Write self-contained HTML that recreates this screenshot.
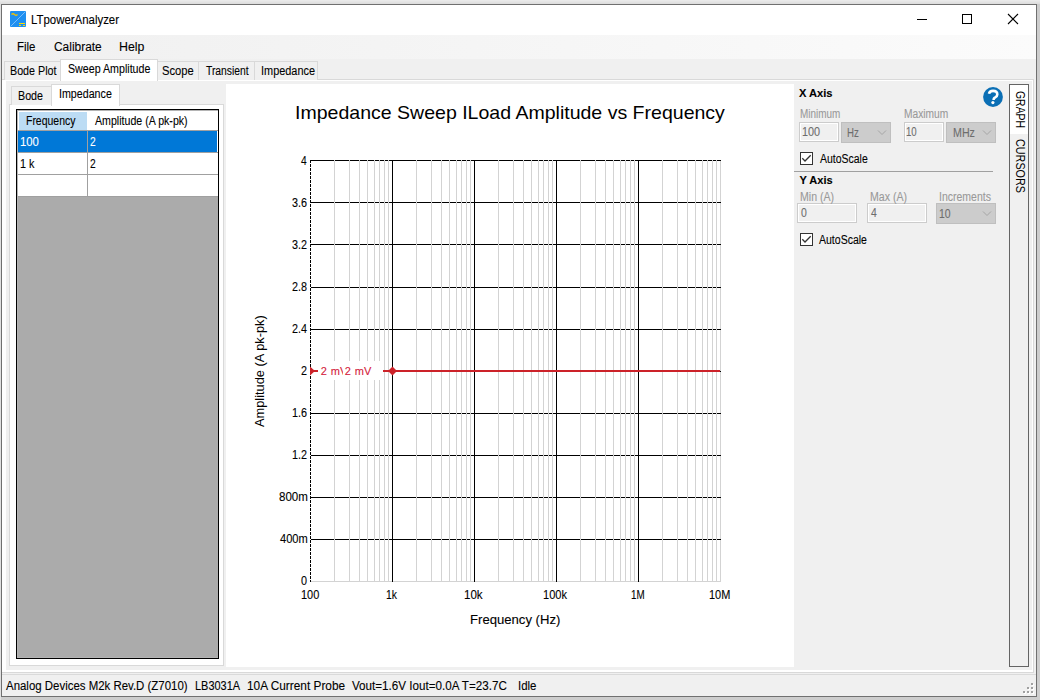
<!DOCTYPE html>
<html><head><meta charset="utf-8">
<style>
html,body{margin:0;padding:0;width:1040px;height:700px;overflow:hidden;background:#cdcdcd;font-family:"Liberation Sans",sans-serif;}
.a{position:absolute;box-sizing:border-box;}
.t{position:absolute;white-space:nowrap;transform-origin:0 0;font-family:"Liberation Sans",sans-serif;-webkit-text-stroke:0.1px currentColor;}
</style></head><body>
<div class="a" style="left:0;top:0;width:1040px;height:4px;background:linear-gradient(#ececec,#dcdcdc)"></div>
<div class="a" style="left:0;top:4px;width:1px;height:696px;background:#e0e0e0"></div>
<!-- window -->
<div class="a" style="left:1px;top:4px;width:1036px;height:693px;border:1px solid #707070;background:#f0f0f0"></div>
<!-- title bar -->
<div class="a" style="left:2px;top:5px;width:1034px;height:30px;background:#fff"></div>
<!-- menu bar -->
<div class="a" style="left:2px;top:35px;width:1034px;height:24px;background:linear-gradient(to right,#f0f0f0,#fbfbfb)"></div>
<!-- tab strip -->
<div class="a" style="left:2px;top:59px;width:1034px;height:20px;background:#f0f0f0"></div>
<!-- outer tab pane -->
<div class="a" style="left:2px;top:79px;width:1032px;height:594px;border:1px solid #d9d9d9;border-left:none;background:#fff"></div>
<div class="a" style="left:6px;top:81px;width:1026px;height:589px;background:#f0f0f0"></div>
<!-- outer tabs -->
<div class="a" style="left:4px;top:61px;width:57px;height:19px;border:1px solid #d9d9d9;border-bottom:none;background:#f0f0f0"></div>
<div class="a" style="left:157px;top:61px;width:42px;height:19px;border:1px solid #d9d9d9;border-bottom:none;background:#f0f0f0"></div>
<div class="a" style="left:198px;top:61px;width:57px;height:19px;border:1px solid #d9d9d9;border-bottom:none;background:#f0f0f0"></div>
<div class="a" style="left:254px;top:61px;width:64px;height:19px;border:1px solid #d9d9d9;border-bottom:none;background:#f0f0f0"></div>
<div class="a" style="left:60px;top:59px;width:98px;height:22px;border:1px solid #d9d9d9;border-bottom:none;background:#fff"></div>
<!-- inner tab pane -->
<div class="a" style="left:9px;top:104px;width:215px;height:562px;border:1px solid #d9d9d9;background:#fff"></div>
<div class="a" style="left:11px;top:86px;width:41px;height:19px;border:1px solid #d9d9d9;border-bottom:none;background:#f0f0f0"></div>
<div class="a" style="left:51px;top:84px;width:69px;height:22px;border:1px solid #d9d9d9;border-bottom:none;background:#fff"></div>
<!-- table -->
<div class="a" style="left:16px;top:109px;width:203px;height:550px;border:1px solid #000;background:#ababab"></div>
<div class="a" style="left:17px;top:110px;width:201px;height:548px;border:1px solid #b4b4b4;border-right:none;"></div>
<div class="a" style="left:18px;top:111px;width:200px;height:86px;background:#fff"></div>
<div class="a" style="left:19px;top:112px;width:68px;height:18px;background:#bcdcf4"></div>
<div class="a" style="left:18px;top:130px;width:200px;height:1px;background:#a0a0a0"></div>
<div class="a" style="left:18px;top:131px;width:199px;height:21px;background:#0078d7"></div>
<div class="a" style="left:18px;top:152px;width:200px;height:1px;background:#a0a0a0"></div>
<div class="a" style="left:18px;top:174px;width:200px;height:1px;background:#a0a0a0"></div>
<div class="a" style="left:18px;top:196px;width:200px;height:1px;background:#a0a0a0"></div>
<div class="a" style="left:87px;top:131px;width:1px;height:66px;background:#a0a0a0"></div>
<!-- plot -->
<div class="a" style="left:226px;top:84px;width:568px;height:583px;background:#fff"></div>
<!-- vertical tabs -->
<div class="a" style="left:1009px;top:84px;width:20px;height:583px;border:1px solid #646464;background:#f0f0f0"></div>
<div class="a" style="left:1010px;top:85px;width:18px;height:49px;background:#fff"></div>
<!-- separator -->
<div class="a" style="left:794px;top:171px;width:199px;height:1px;background:#a0a0a0"></div>
<!-- status bar -->
<div class="a" style="left:2px;top:674px;width:1034px;height:1px;background:#dadada"></div>
<div class="a" style="left:2px;top:675px;width:1034px;height:21px;background:#f0f0f0"></div>
<svg class="a" style="left:0;top:0" width="1040" height="700" shape-rendering="crispEdges"><line x1="720.5" y1="160" x2="720.5" y2="582" stroke="#d3d3d3" stroke-width="1"/><line x1="310" y1="581.5" x2="721" y2="581.5" stroke="#d3d3d3" stroke-width="1"/><line x1="311" y1="160.5" x2="721" y2="160.5" stroke="#000" stroke-width="1"/><line x1="311" y1="202.5" x2="721" y2="202.5" stroke="#000" stroke-width="1"/><line x1="311" y1="244.5" x2="721" y2="244.5" stroke="#000" stroke-width="1"/><line x1="311" y1="287.5" x2="721" y2="287.5" stroke="#000" stroke-width="1"/><line x1="311" y1="329.5" x2="721" y2="329.5" stroke="#000" stroke-width="1"/><line x1="311" y1="371.5" x2="721" y2="371.5" stroke="#000" stroke-width="1"/><line x1="311" y1="413.5" x2="721" y2="413.5" stroke="#000" stroke-width="1"/><line x1="311" y1="455.5" x2="721" y2="455.5" stroke="#000" stroke-width="1"/><line x1="311" y1="497.5" x2="721" y2="497.5" stroke="#000" stroke-width="1"/><line x1="311" y1="539.5" x2="721" y2="539.5" stroke="#000" stroke-width="1"/><line x1="334.5" y1="160" x2="334.5" y2="582" stroke="#d3d3d3" stroke-width="1"/><line x1="349.5" y1="160" x2="349.5" y2="582" stroke="#d3d3d3" stroke-width="1"/><line x1="359.5" y1="160" x2="359.5" y2="582" stroke="#d3d3d3" stroke-width="1"/><line x1="367.5" y1="160" x2="367.5" y2="582" stroke="#d3d3d3" stroke-width="1"/><line x1="374.5" y1="160" x2="374.5" y2="582" stroke="#d3d3d3" stroke-width="1"/><line x1="379.5" y1="160" x2="379.5" y2="582" stroke="#d3d3d3" stroke-width="1"/><line x1="384.5" y1="160" x2="384.5" y2="582" stroke="#d3d3d3" stroke-width="1"/><line x1="388.5" y1="160" x2="388.5" y2="582" stroke="#d3d3d3" stroke-width="1"/><line x1="416.5" y1="160" x2="416.5" y2="582" stroke="#d3d3d3" stroke-width="1"/><line x1="431.5" y1="160" x2="431.5" y2="582" stroke="#d3d3d3" stroke-width="1"/><line x1="441.5" y1="160" x2="441.5" y2="582" stroke="#d3d3d3" stroke-width="1"/><line x1="449.5" y1="160" x2="449.5" y2="582" stroke="#d3d3d3" stroke-width="1"/><line x1="456.5" y1="160" x2="456.5" y2="582" stroke="#d3d3d3" stroke-width="1"/><line x1="461.5" y1="160" x2="461.5" y2="582" stroke="#d3d3d3" stroke-width="1"/><line x1="466.5" y1="160" x2="466.5" y2="582" stroke="#d3d3d3" stroke-width="1"/><line x1="470.5" y1="160" x2="470.5" y2="582" stroke="#d3d3d3" stroke-width="1"/><line x1="498.5" y1="160" x2="498.5" y2="582" stroke="#d3d3d3" stroke-width="1"/><line x1="513.5" y1="160" x2="513.5" y2="582" stroke="#d3d3d3" stroke-width="1"/><line x1="523.5" y1="160" x2="523.5" y2="582" stroke="#d3d3d3" stroke-width="1"/><line x1="531.5" y1="160" x2="531.5" y2="582" stroke="#d3d3d3" stroke-width="1"/><line x1="538.5" y1="160" x2="538.5" y2="582" stroke="#d3d3d3" stroke-width="1"/><line x1="543.5" y1="160" x2="543.5" y2="582" stroke="#d3d3d3" stroke-width="1"/><line x1="548.5" y1="160" x2="548.5" y2="582" stroke="#d3d3d3" stroke-width="1"/><line x1="552.5" y1="160" x2="552.5" y2="582" stroke="#d3d3d3" stroke-width="1"/><line x1="580.5" y1="160" x2="580.5" y2="582" stroke="#d3d3d3" stroke-width="1"/><line x1="595.5" y1="160" x2="595.5" y2="582" stroke="#d3d3d3" stroke-width="1"/><line x1="605.5" y1="160" x2="605.5" y2="582" stroke="#d3d3d3" stroke-width="1"/><line x1="613.5" y1="160" x2="613.5" y2="582" stroke="#d3d3d3" stroke-width="1"/><line x1="620.5" y1="160" x2="620.5" y2="582" stroke="#d3d3d3" stroke-width="1"/><line x1="625.5" y1="160" x2="625.5" y2="582" stroke="#d3d3d3" stroke-width="1"/><line x1="630.5" y1="160" x2="630.5" y2="582" stroke="#d3d3d3" stroke-width="1"/><line x1="634.5" y1="160" x2="634.5" y2="582" stroke="#d3d3d3" stroke-width="1"/><line x1="662.5" y1="160" x2="662.5" y2="582" stroke="#d3d3d3" stroke-width="1"/><line x1="677.5" y1="160" x2="677.5" y2="582" stroke="#d3d3d3" stroke-width="1"/><line x1="687.5" y1="160" x2="687.5" y2="582" stroke="#d3d3d3" stroke-width="1"/><line x1="695.5" y1="160" x2="695.5" y2="582" stroke="#d3d3d3" stroke-width="1"/><line x1="702.5" y1="160" x2="702.5" y2="582" stroke="#d3d3d3" stroke-width="1"/><line x1="707.5" y1="160" x2="707.5" y2="582" stroke="#d3d3d3" stroke-width="1"/><line x1="712.5" y1="160" x2="712.5" y2="582" stroke="#d3d3d3" stroke-width="1"/><line x1="716.5" y1="160" x2="716.5" y2="582" stroke="#d3d3d3" stroke-width="1"/><line x1="392.5" y1="160" x2="392.5" y2="582" stroke="#000" stroke-width="1"/><line x1="474.5" y1="160" x2="474.5" y2="582" stroke="#000" stroke-width="1"/><line x1="556.5" y1="160" x2="556.5" y2="582" stroke="#000" stroke-width="1"/><line x1="638.5" y1="160" x2="638.5" y2="582" stroke="#000" stroke-width="1"/><line x1="310.5" y1="160" x2="310.5" y2="582" stroke="#000" stroke-width="1" stroke-dasharray="3 1"/><rect x="318" y="361" width="65" height="19" fill="#fff"/><rect x="383" y="370" width="337" height="2" fill="#cc2229"/><rect x="310" y="370" width="8" height="2" fill="#cc2229"/><path d="M310 366.5 L315 371 L310 375.5 Z" fill="#cc2229" shape-rendering="geometricPrecision"/><path d="M392.5 366.5 L397 371 L392.5 375.5 L388 371 Z" fill="#cc2229" shape-rendering="geometricPrecision"/><rect x="917" y="19" width="10" height="1" fill="#000"/><rect x="962.5" y="14.5" width="9" height="9" fill="none" stroke="#000" stroke-width="1"/><path d="M1008 14 L1018 24 M1018 14 L1008 24" stroke="#000" stroke-width="1.1" shape-rendering="geometricPrecision"/><rect x="10" y="11" width="16" height="16" rx="1" fill="#1e8ff0" shape-rendering="geometricPrecision"/><path d="M11 26 L25 12" stroke="#9fd0ff" stroke-width="0.7" shape-rendering="geometricPrecision"/><path d="M11.5 14.5 q1.5 -1.5 3 0 t3 0" stroke="#f2c200" stroke-width="1.2" fill="none" shape-rendering="geometricPrecision"/><rect x="19" y="22.5" width="6" height="1.2" fill="#ffd800"/><rect x="19" y="25" width="2" height="1" fill="#ffd800"/><rect x="23" y="25" width="2" height="1" fill="#ffd800"/><circle cx="993" cy="97" r="9.9" fill="#0b6fb5" shape-rendering="geometricPrecision"/><path d="M989 93.8 C989.4 91.7 990.9 90.9 993 90.9 C995.6 90.9 997.3 92.3 997.3 94.4 C997.3 96.4 995.6 97.1 994.5 97.9 C993.8 98.4 993.6 98.9 993.6 99.9" stroke="#fff" stroke-width="2.6" fill="none" shape-rendering="geometricPrecision"/><circle cx="992.9" cy="102.6" r="1.6" fill="#fff" shape-rendering="geometricPrecision"/><rect x="800.5" y="152.5" width="12" height="12" fill="#fff" stroke="#333"/><path d="M802.3 158.3 L805 161 L810.7 155.3" stroke="#333" stroke-width="1.3" fill="none" shape-rendering="geometricPrecision"/><rect x="800.5" y="233.5" width="12" height="12" fill="#fff" stroke="#333"/><path d="M802.3 239.3 L805 242 L810.7 236.3" stroke="#333" stroke-width="1.3" fill="none" shape-rendering="geometricPrecision"/><rect x="799.5" y="122.5" width="39" height="19" fill="#f0f0f0" stroke="#cccccc"/><rect x="800.5" y="123.5" width="37" height="17" fill="none" stroke="#fff"/><rect x="841.5" y="122.5" width="49" height="20" fill="#cccccc" stroke="#bfbfbf"/><path d="M878 130.5 L882 134.5 L886 130.5" stroke="#a6a6a6" fill="none" shape-rendering="geometricPrecision"/><rect x="904.5" y="122.5" width="39" height="19" fill="#f0f0f0" stroke="#cccccc"/><rect x="905.5" y="123.5" width="37" height="17" fill="none" stroke="#fff"/><rect x="946.5" y="122.5" width="49" height="20" fill="#cccccc" stroke="#bfbfbf"/><path d="M983 130.5 L987 134.5 L991 130.5" stroke="#a6a6a6" fill="none" shape-rendering="geometricPrecision"/><rect x="797.5" y="203.5" width="59" height="19" fill="#f0f0f0" stroke="#cccccc"/><rect x="798.5" y="204.5" width="57" height="17" fill="none" stroke="#fff"/><rect x="867.5" y="203.5" width="59" height="19" fill="#f0f0f0" stroke="#cccccc"/><rect x="868.5" y="204.5" width="57" height="17" fill="none" stroke="#fff"/><rect x="936.5" y="203.5" width="59" height="20" fill="#cccccc" stroke="#bfbfbf"/><path d="M983 211.5 L987 215.5 L991 211.5" stroke="#a6a6a6" fill="none" shape-rendering="geometricPrecision"/><rect x="1032" y="684" width="2" height="2" fill="#fff"/><rect x="1031" y="683" width="2" height="2" fill="#a0a0a0"/><rect x="1028" y="688" width="2" height="2" fill="#fff"/><rect x="1027" y="687" width="2" height="2" fill="#a0a0a0"/><rect x="1032" y="688" width="2" height="2" fill="#fff"/><rect x="1031" y="687" width="2" height="2" fill="#a0a0a0"/><rect x="1024" y="692" width="2" height="2" fill="#fff"/><rect x="1023" y="691" width="2" height="2" fill="#a0a0a0"/><rect x="1028" y="692" width="2" height="2" fill="#fff"/><rect x="1027" y="691" width="2" height="2" fill="#a0a0a0"/><rect x="1032" y="692" width="2" height="2" fill="#fff"/><rect x="1031" y="691" width="2" height="2" fill="#a0a0a0"/></svg>
<span class="t" style="left:30.78px;top:13.90px;font-size:12px;line-height:12px;color:#000;transform:scaleX(0.9518);">LTpowerAnalyzer</span>
<span class="t" style="left:16.94px;top:40.80px;font-size:12px;line-height:12px;color:#000;transform:scaleX(0.9568);">File</span>
<span class="t" style="left:53.77px;top:40.80px;font-size:12px;line-height:12px;color:#000;transform:scaleX(0.9940);">Calibrate</span>
<span class="t" style="left:119.26px;top:40.80px;font-size:12px;line-height:12px;color:#000;transform:scaleX(1.0295);">Help</span>
<span class="t" style="left:9.75px;top:64.90px;font-size:12px;line-height:12px;color:#000;transform:scaleX(0.8932);">Bode Plot</span>
<span class="t" style="left:68.39px;top:62.60px;font-size:12px;line-height:12px;color:#000;transform:scaleX(0.8884);">Sweep Amplitude</span>
<span class="t" style="left:161.55px;top:64.90px;font-size:12px;line-height:12px;color:#000;transform:scaleX(0.9338);">Scope</span>
<span class="t" style="left:205.88px;top:64.90px;font-size:12px;line-height:12px;color:#000;transform:scaleX(0.8602);">Transient</span>
<span class="t" style="left:261.28px;top:64.90px;font-size:12px;line-height:12px;color:#000;transform:scaleX(0.9101);">Impedance</span>
<span class="t" style="left:17.53px;top:90.00px;font-size:12px;line-height:12px;color:#000;transform:scaleX(0.8930);">Bode</span>
<span class="t" style="left:58.89px;top:87.50px;font-size:12px;line-height:12px;color:#000;transform:scaleX(0.8896);">Impedance</span>
<span class="t" style="left:26.19px;top:114.60px;font-size:12px;line-height:12px;color:#000;transform:scaleX(0.8718);">Frequency</span>
<span class="t" style="left:95.40px;top:114.60px;font-size:12px;line-height:12px;color:#000;transform:scaleX(0.8847);">Amplitude (A pk-pk)</span>
<span class="t" style="left:20.42px;top:135.80px;font-size:12px;line-height:12px;color:#fff;transform:scaleX(0.9442);">100</span>
<span class="t" style="left:90.40px;top:135.80px;font-size:12px;line-height:12px;color:#fff;transform:scaleX(0.8571);">2</span>
<span class="t" style="left:20.48px;top:157.80px;font-size:12px;line-height:12px;color:#000;transform:scaleX(0.9020);">1 k</span>
<span class="t" style="left:90.40px;top:157.80px;font-size:12px;line-height:12px;color:#000;transform:scaleX(0.8571);">2</span>
<span class="t" style="left:799.38px;top:87.70px;font-size:11px;line-height:11px;color:#000;font-weight:bold;transform:scaleX(1.0093);">X Axis</span>
<span class="t" style="left:800.34px;top:107.70px;font-size:12px;line-height:12px;color:#999999;transform:scaleX(0.8274);">Minimum</span>
<span class="t" style="left:904.32px;top:107.70px;font-size:12px;line-height:12px;color:#999999;transform:scaleX(0.8517);">Maximum</span>
<span class="t" style="left:802.02px;top:126.00px;font-size:12px;line-height:12px;color:#6d6d6d;transform:scaleX(0.9029);">100</span>
<span class="t" style="left:847.00px;top:126.50px;font-size:12px;line-height:12px;color:#6d6d6d;transform:scaleX(0.8046);">Hz</span>
<span class="t" style="left:906.40px;top:126.00px;font-size:12px;line-height:12px;color:#6d6d6d;transform:scaleX(0.8045);">10</span>
<span class="t" style="left:952.68px;top:126.50px;font-size:12px;line-height:12px;color:#6d6d6d;transform:scaleX(0.8886);">MHz</span>
<span class="t" style="left:819.60px;top:153.00px;font-size:12px;line-height:12px;color:#000;transform:scaleX(0.8727);">AutoScale</span>
<span class="t" style="left:799.59px;top:175.00px;font-size:11px;line-height:11px;color:#000;font-weight:bold;">Y Axis</span>
<span class="t" style="left:799.55px;top:191.20px;font-size:12px;line-height:12px;color:#999999;transform:scaleX(0.8824);">Min (A)</span>
<span class="t" style="left:869.71px;top:191.20px;font-size:12px;line-height:12px;color:#999999;transform:scaleX(0.8832);">Max (A)</span>
<span class="t" style="left:938.72px;top:191.20px;font-size:12px;line-height:12px;color:#999999;transform:scaleX(0.8744);">Increments</span>
<span class="t" style="left:801.00px;top:206.70px;font-size:12px;line-height:12px;color:#6d6d6d;transform:scaleX(0.8700);">0</span>
<span class="t" style="left:870.80px;top:206.70px;font-size:12px;line-height:12px;color:#6d6d6d;transform:scaleX(0.8700);">4</span>
<span class="t" style="left:939.40px;top:207.50px;font-size:12px;line-height:12px;color:#6d6d6d;transform:scaleX(0.8700);">10</span>
<span class="t" style="left:819.38px;top:234.00px;font-size:12px;line-height:12px;color:#000;transform:scaleX(0.8762);">AutoScale</span>
<span class="t" style="left:6.39px;top:679.90px;font-size:12px;line-height:12px;color:#000;transform:scaleX(0.9532);">Analog Devices M2k Rev.D (Z7010)</span>
<span class="t" style="left:194.96px;top:679.90px;font-size:12px;line-height:12px;color:#000;transform:scaleX(0.9123);">LB3031A</span>
<span class="t" style="left:247.15px;top:679.90px;font-size:12px;line-height:12px;color:#000;transform:scaleX(0.9871);">10A Current Probe</span>
<span class="t" style="left:351.60px;top:679.90px;font-size:12px;line-height:12px;color:#000;transform:scaleX(0.9704);">Vout=1.6V Iout=0.0A T=23.7C</span>
<span class="t" style="left:518.41px;top:679.90px;font-size:12px;line-height:12px;color:#000;transform:scaleX(0.9556);">Idle</span>
<span class="t" style="left:295.16px;top:102.80px;font-size:19px;line-height:19px;color:#000;transform:scaleX(1.0278);-webkit-text-stroke:0;">Impedance Sweep ILoad Amplitude vs Frequency</span>
<span class="t" style="left:470.39px;top:612.50px;font-size:13px;line-height:13px;color:#000;transform:scaleX(1.0086);">Frequency (Hz)</span>
<span class="t" style="left:300.60px;top:155.00px;font-size:12px;line-height:12px;color:#000;transform:scaleX(0.8571);">4</span>
<span class="t" style="left:292.29px;top:197.00px;font-size:12px;line-height:12px;color:#000;transform:scaleX(0.9000);">3.6</span>
<span class="t" style="left:292.29px;top:239.00px;font-size:12px;line-height:12px;color:#000;transform:scaleX(0.9000);">3.2</span>
<span class="t" style="left:292.29px;top:281.00px;font-size:12px;line-height:12px;color:#000;transform:scaleX(0.9000);">2.8</span>
<span class="t" style="left:292.29px;top:323.00px;font-size:12px;line-height:12px;color:#000;transform:scaleX(0.9000);">2.4</span>
<span class="t" style="left:301.30px;top:365.00px;font-size:12px;line-height:12px;color:#000;transform:scaleX(0.9000);">2</span>
<span class="t" style="left:292.29px;top:407.00px;font-size:12px;line-height:12px;color:#000;transform:scaleX(0.9000);">1.6</span>
<span class="t" style="left:292.29px;top:449.00px;font-size:12px;line-height:12px;color:#000;transform:scaleX(0.9000);">1.2</span>
<span class="t" style="left:278.74px;top:491.00px;font-size:12px;line-height:12px;color:#000;transform:scaleX(0.9625);">800m</span>
<span class="t" style="left:279.79px;top:533.00px;font-size:12px;line-height:12px;color:#000;transform:scaleX(0.9268);">400m</span>
<span class="t" style="left:301.30px;top:575.00px;font-size:12px;line-height:12px;color:#000;transform:scaleX(0.9000);">0</span>
<span class="t" style="left:300.71px;top:589.00px;font-size:12px;line-height:12px;color:#000;transform:scaleX(0.9127);">100</span>
<span class="t" style="left:386.10px;top:589.00px;font-size:12px;line-height:12px;color:#000;transform:scaleX(0.8630);">1k</span>
<span class="t" style="left:464.10px;top:589.00px;font-size:12px;line-height:12px;color:#000;transform:scaleX(0.9637);">10k</span>
<span class="t" style="left:543.15px;top:589.00px;font-size:12px;line-height:12px;color:#000;transform:scaleX(0.9198);">100k</span>
<span class="t" style="left:631.20px;top:589.00px;font-size:12px;line-height:12px;color:#000;transform:scaleX(0.8156);">1M</span>
<span class="t" style="left:709.27px;top:589.00px;font-size:12px;line-height:12px;color:#000;transform:scaleX(0.9142);">10M</span>
<span class="t" style="left:252.7px;top:426.5px;font-size:13px;line-height:13px;transform:rotate(-90deg) scaleX(0.985);-webkit-text-stroke:0;">Amplitude (A pk-pk)</span>
<span class="t" style="left:1026px;top:90.5px;font-size:12px;line-height:12px;transform:rotate(90deg) scaleX(0.87);-webkit-text-stroke:0;">GRAPH</span>
<span class="t" style="left:1026px;top:139px;font-size:12px;line-height:12px;transform:rotate(90deg) scaleX(0.9);-webkit-text-stroke:0;">CURSORS</span>
<span class="t" style="left:320.8px;top:366px;font-size:11px;line-height:11px;color:#d41c3c;word-spacing:0.8px">2 mV</span>
<div class="a" style="left:343px;top:361px;width:40px;height:19px;background:#fff"></div>
<span class="t" style="left:344.8px;top:366px;font-size:11px;line-height:11px;color:#d41c3c;word-spacing:0.8px">2 mV</span>
</body></html>
